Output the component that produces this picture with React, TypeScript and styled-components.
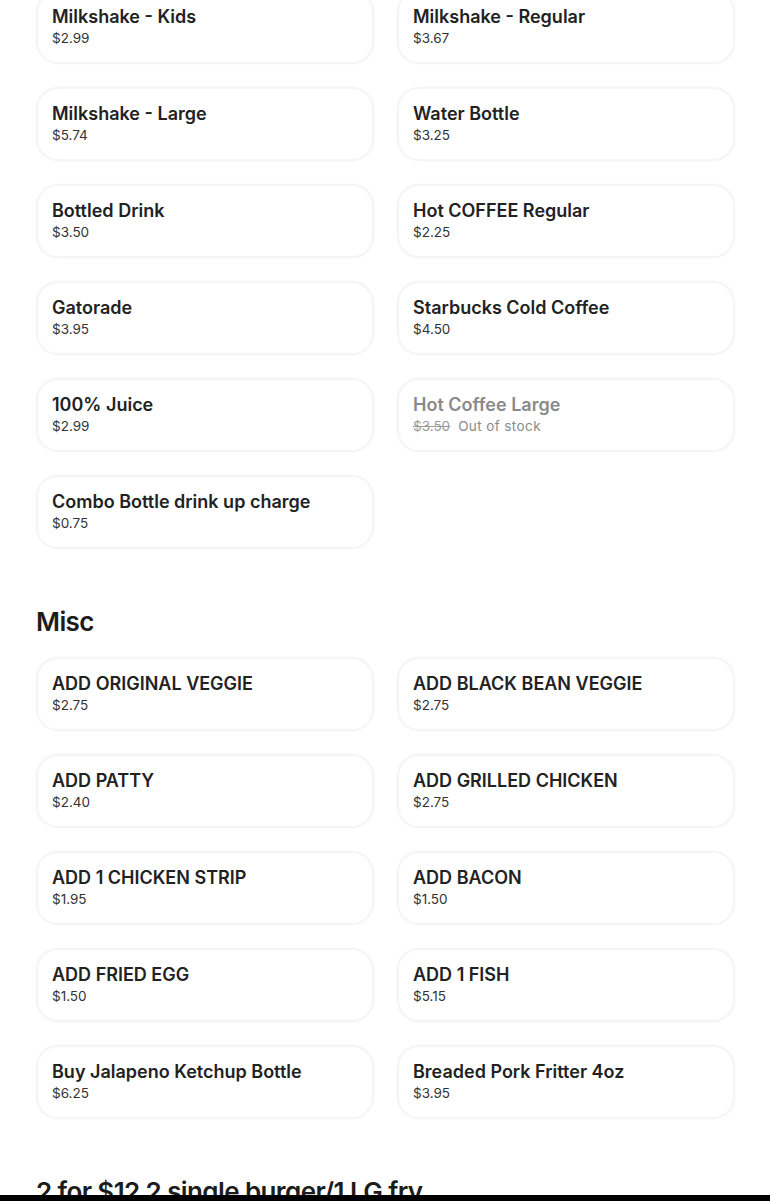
import React from "react";
import styled, { createGlobalStyle } from "styled-components";

const Global = createGlobalStyle`
  html, body { margin: 0; padding: 0; background: #fff; }
  body { font-family: Inter, "Noto Sans", sans-serif; color: #222; overflow: hidden; }
`;

const Page = styled.div`
  padding: 0 35px 0 36px;
  margin-top: -10px;
`;

const Section = styled.section`
  & + & { margin-top: 55px; }
`;

const Heading = styled.h2`
  margin: 0 0 17px;
  font-size: 26px;
  line-height: 36px;
  font-weight: 600;
  letter-spacing: -0.6px;
  color: #1c1c1c;
`;

const Grid = styled.div`
  display: grid;
  grid-template-columns: 1fr 1fr;
  column-gap: 23px;
  row-gap: 23px;
`;

const Card = styled.div<{ $off?: boolean }>`
  height: 74px;
  box-sizing: border-box;
  padding: 13px 16px 0;
  border-radius: 22px;
  border: 2px solid #f5f5f5;
  box-shadow: 0 0 3px rgba(0, 0, 0, 0.035);
  background: #fff;
  display: flex;
  flex-direction: column;
  color: ${(p) => (p.$off ? "#8a8a8a" : "#222")};
`;

const Title = styled.div`
  font-size: 18px;
  line-height: 24px;
  font-weight: 600;
  letter-spacing: 0;
  margin-left: -2px;
`;

const PriceRow = styled.div`
  display: flex;
  gap: 8px;
  font-size: 13.5px;
  line-height: 18px;
  margin-left: -2px;
`;

const Price = styled.span<{ $off?: boolean }>`
  color: ${(p) => (p.$off ? "#9a9a9a" : "#333")};
  text-decoration: ${(p) => (p.$off ? "line-through" : "none")};
`;

const Stock = styled.span`
  color: #8a8a8a;
  letter-spacing: 0.4px;
`;

const BottomBar = styled.div`
  position: fixed;
  left: 0;
  right: 0;
  bottom: 0;
  height: 6px;
  background: #000;
`;

type Item = { name: string; price: string; off?: boolean };

const drinks: Item[] = [
  { name: "Milkshake - Kids", price: "$2.99" },
  { name: "Milkshake - Regular", price: "$3.67" },
  { name: "Milkshake - Large", price: "$5.74" },
  { name: "Water Bottle", price: "$3.25" },
  { name: "Bottled Drink", price: "$3.50" },
  { name: "Hot COFFEE Regular", price: "$2.25" },
  { name: "Gatorade", price: "$3.95" },
  { name: "Starbucks Cold Coffee", price: "$4.50" },
  { name: "100% Juice", price: "$2.99" },
  { name: "Hot Coffee Large", price: "$3.50", off: true },
  { name: "Combo Bottle drink up charge", price: "$0.75" },
];

const misc: Item[] = [
  { name: "ADD ORIGINAL VEGGIE", price: "$2.75" },
  { name: "ADD BLACK BEAN VEGGIE", price: "$2.75" },
  { name: "ADD PATTY", price: "$2.40" },
  { name: "ADD GRILLED CHICKEN", price: "$2.75" },
  { name: "ADD 1 CHICKEN STRIP", price: "$1.95" },
  { name: "ADD BACON", price: "$1.50" },
  { name: "ADD FRIED EGG", price: "$1.50" },
  { name: "ADD 1 FISH", price: "$5.15" },
  { name: "Buy Jalapeno Ketchup Bottle", price: "$6.25" },
  { name: "Breaded Pork Fritter 4oz", price: "$3.95" },
];

const ItemCard = ({ item }: { item: Item }) => (
  <Card $off={item.off}>
    <Title>{item.name}</Title>
    <PriceRow>
      <Price $off={item.off}>{item.price}</Price>
      {item.off && <Stock>Out of stock</Stock>}
    </PriceRow>
  </Card>
);

export default function App() {
  return (
    <>
      <Global />
      <Page>
        <Section>
          <Grid>
            {drinks.map((d) => (
              <ItemCard key={d.name} item={d} />
            ))}
          </Grid>
        </Section>
        <Section>
          <Heading>Misc</Heading>
          <Grid>
            {misc.map((d) => (
              <ItemCard key={d.name} item={d} />
            ))}
          </Grid>
        </Section>
        <Section>
          <Heading>2 for $12 2 single burger/1 LG fry</Heading>
        </Section>
      </Page>
      <BottomBar />
    </>
  );
}
